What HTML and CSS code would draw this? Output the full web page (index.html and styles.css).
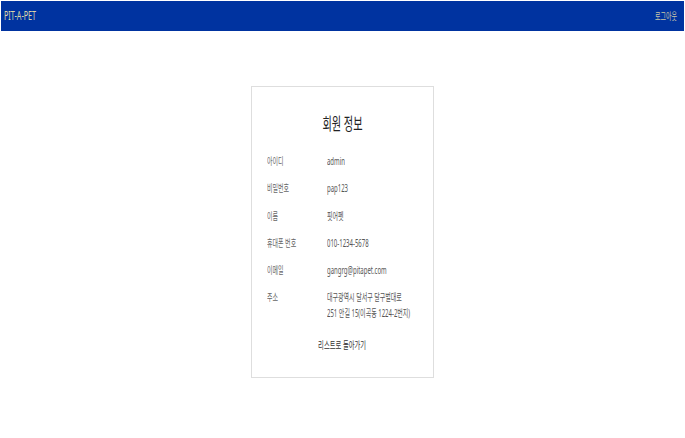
FILE: index.html
```html
<!DOCTYPE html>
<html lang="ko">
<head>
<meta charset="utf-8">
<title>회원 정보</title>
<link rel="stylesheet" href="styles.css">
</head>
<body>
<header class="topbar">
  <span class="brand"><span class="sq">PIT-A-PET</span></span>
  <span class="logout"><span class="sq">로그아웃</span></span>
</header>
<main class="page">
  <section class="card">
    <h1 class="title"><span class="sq-c">회원 정보</span></h1>
    <div class="row"><div class="label"><span class="sq">아이디</span></div><div class="value"><span class="sq">admin</span></div></div>
    <div class="row"><div class="label"><span class="sq">비밀번호</span></div><div class="value"><span class="sq">pap123</span></div></div>
    <div class="row"><div class="label"><span class="sq">이름</span></div><div class="value"><span class="sq">핏어펫</span></div></div>
    <div class="row"><div class="label"><span class="sq">휴대폰 번호</span></div><div class="value"><span class="sq">010-1234-5678</span></div></div>
    <div class="row"><div class="label"><span class="sq">이메일</span></div><div class="value"><span class="sq">gangrg@pitapet.com</span></div></div>
    <div class="row"><div class="label"><span class="sq">주소</span></div><div class="value"><span class="sq">대구광역시 달서구 달구벌대로<br>251 안길 15(이곡동 1224-2번지)</span></div></div>
    <div class="back"><a class="sq-c" href="#">리스트로 돌아가기</a></div>
  </section>
</main>
</body>
</html>
```
FILE: styles.css
```css
html, body {
  margin: 0;
  padding: 0;
  background: #ffffff;
}
body {
  font-family: "Noto Sans", "Noto Sans CJK KR", sans-serif;
  color: #333333;
  padding: 1px;
}
.sq {
  display: inline-block;
  white-space: nowrap;
  transform: scaleX(0.6);
  transform-origin: left center;
}
.sq-c {
  display: inline-block;
  white-space: nowrap;
  transform: scaleX(0.6);
  transform-origin: center center;
}
.topbar {
  height: 30px;
  background: #0033a0;
  display: flex;
  align-items: center;
  justify-content: space-between;
  padding: 0 0 0 3px;
}
.brand {
  color: #dcd6a8;
  font-size: 12px;
  line-height: 14px;
  width: 60px;
}
.logout {
  color: #c9c6a8;
  font-size: 10px;
  line-height: 12px;
  width: 29px;
}
.page {
  display: flex;
  justify-content: center;
  padding-top: 55px;
}
.card {
  width: 181px;
  border: 1px solid #dedede;
  padding: 23px 0 24px;
  box-sizing: content-box;
}
.title {
  margin: 0 0 10px;
  text-align: center;
  font-size: 17px;
  font-weight: 400;
  line-height: 28px;
  color: #222222;
}
.row {
  display: flex;
  padding: 6px 0 6px 15px;
  font-size: 10px;
  line-height: 15.25px;
}
.label {
  width: 60px;
  flex: none;
  color: #666666;
}
.value {
  color: #555555;
}
.back {
  margin-top: 11px;
  text-align: center;
  font-size: 10px;
  line-height: 15px;
}
.back a {
  display: inline-block;
  color: #333333;
  text-decoration: none;
  transform: scaleX(0.63);
}
```
